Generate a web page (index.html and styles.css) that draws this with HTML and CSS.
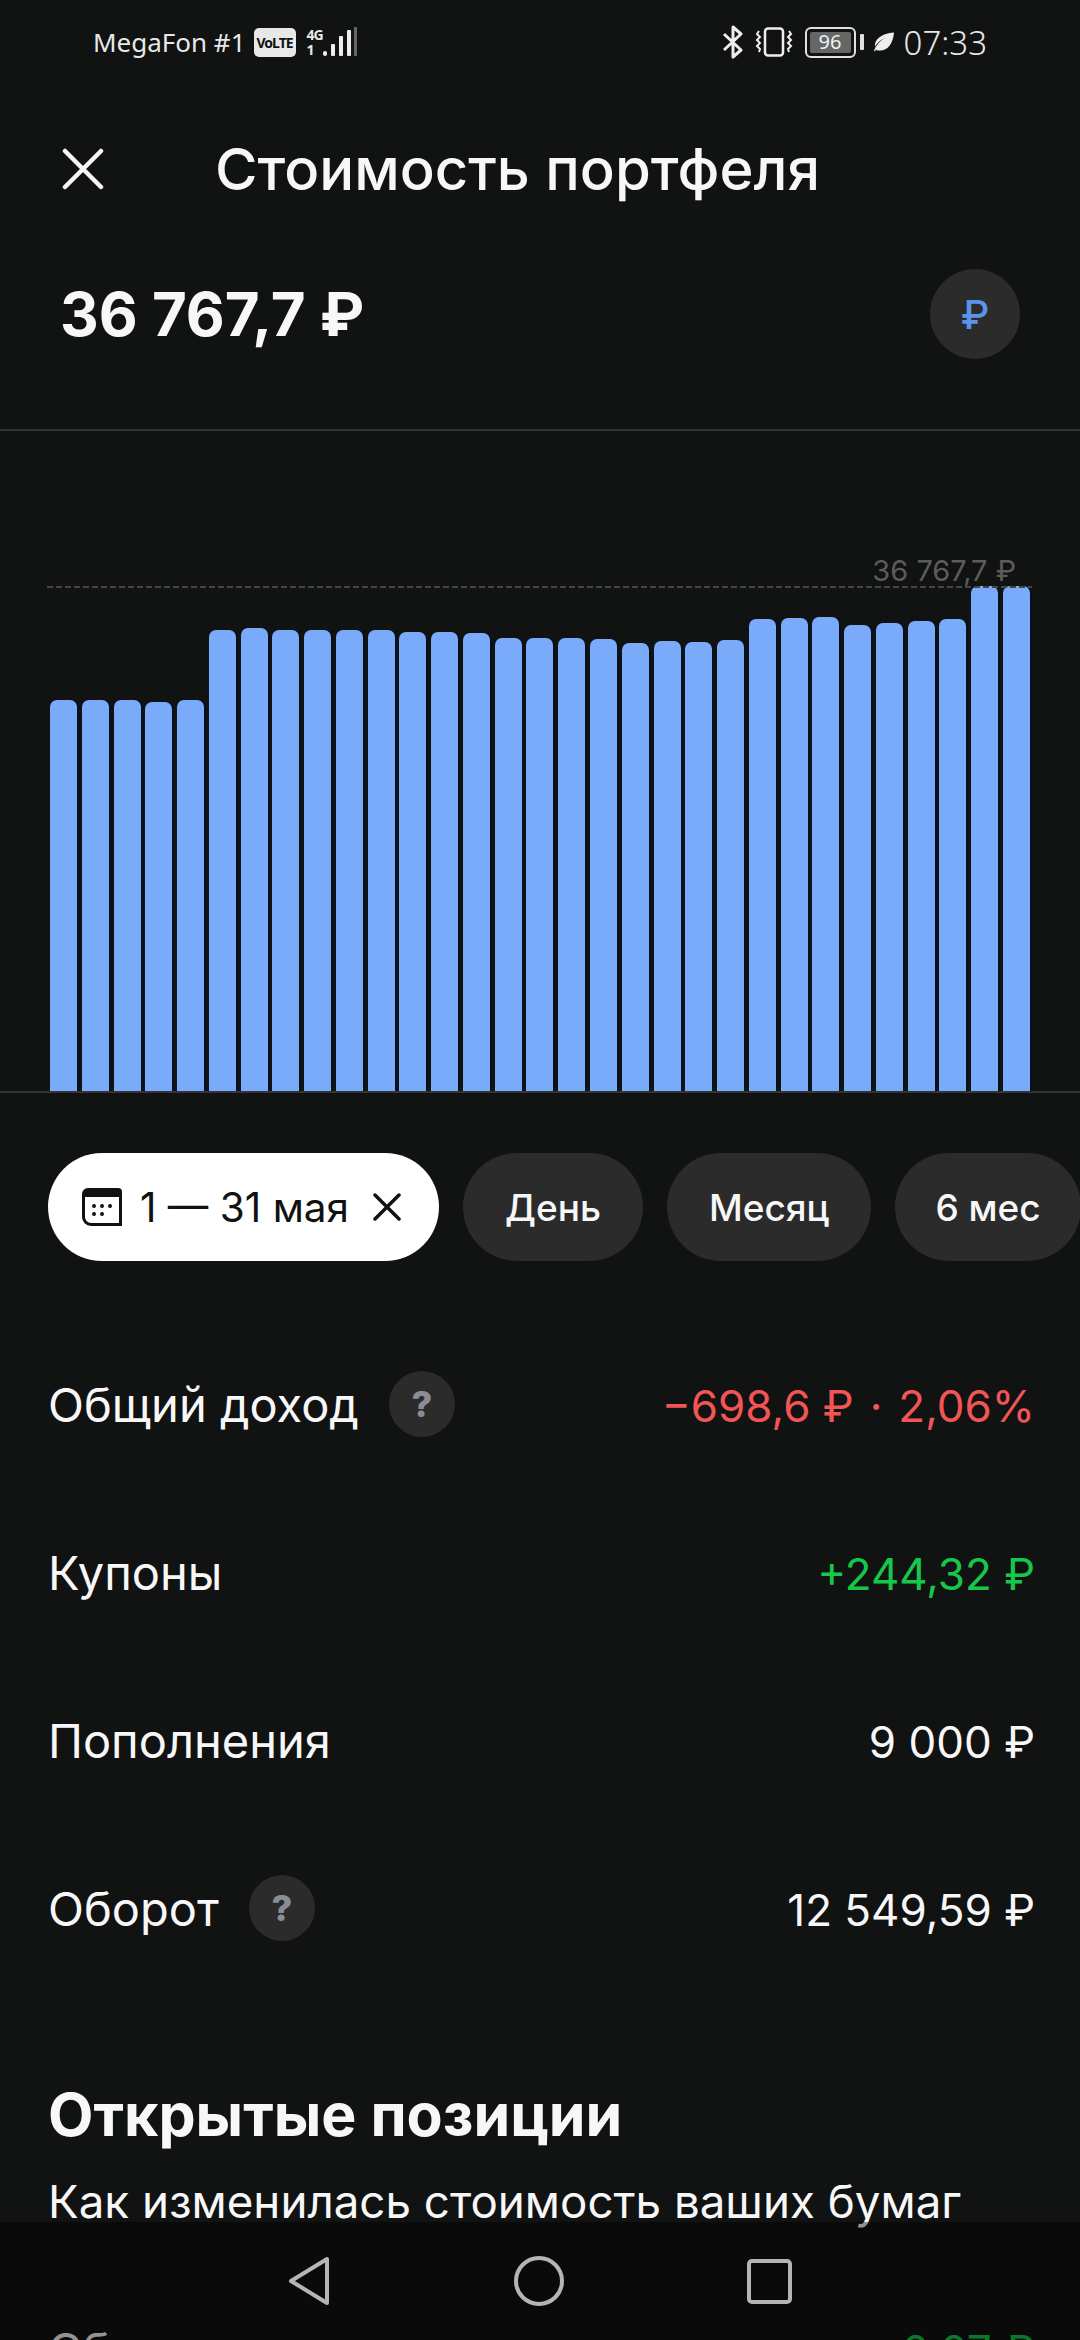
FILE: index.html
```html
<!DOCTYPE html>
<html lang="ru">
<head>
    <meta charset="UTF-8">
    <meta name="viewport" content="width=device-width, initial-scale=1.0">
    <title>Стоимость портфеля</title>
    <link rel="stylesheet" href="styles.css">
</head>
<body>
    <div class="screen">
        <div class="statusbar">
            <div class="status-left">
                <span>MegaFon #1</span>
                <span class="volte">VoLTE</span>
                <span class="net"><span>4G</span><span>1</span></span>
                <svg class="signal" width="34" height="30" viewBox="0 0 34 30">
                    <rect x="0" y="24" width="4" height="5" rx="2" fill="#eee"/>
                    <rect x="8" y="17" width="4" height="12" rx="1" fill="#eee"/>
                    <rect x="16" y="9" width="4" height="20" rx="1" fill="#eee"/>
                    <rect x="24" y="3" width="4" height="26" rx="1" fill="#eee"/>
                    <rect x="31" y="0" width="3" height="29" fill="#666"/>
                </svg>
            </div>
            <div class="status-right">
                <svg width="21" height="34" viewBox="0 0 21 34" fill="none" stroke="#eee" stroke-width="3" stroke-linejoin="round">
                    <path d="M2 9l17 16-8 7V2l8 7L2 25"/>
                </svg>
                <svg width="38" height="30" viewBox="0 0 38 30" fill="none" stroke="#eee" stroke-width="2.5">
                    <rect x="10" y="1.5" width="18" height="27" rx="3"/>
                    <path d="M4 4l-2 3 3 3-3 3 3 3-3 3 3 3-1 3M34 4l2 3-3 3 3 3-3 3 3 3-3 3 1 3" stroke-width="2"/>
                </svg>
                <span class="battery"><span class="battery-fill">96</span></span>
                <span class="battery-cap"></span>
                <svg class="leaf" width="21" height="22" viewBox="0 0 22 22">
                    <path d="M21 1C20 12 15 20 6 20c-2 0-3-.5-4-1l-1 2-1-1C3 13 7 9 13 6 8 8 3 12 1 16 0 8 8 2 21 1z" fill="#eee"/>
                </svg>
                <span class="clock">07:33</span>
            </div>
        </div>

        <div class="title-row">
            <svg class="close-icon" width="42" height="42" viewBox="0 0 42 42" stroke="#f5f5f5" stroke-width="4.5" stroke-linecap="round">
                <path d="M3 3l36 36M39 3L3 39"/>
            </svg>
            <h1>Стоимость портфеля</h1>
        </div>

        <div class="total-row">
            <span class="total">36 767,7 ₽</span>
            <span class="currency">₽</span>
        </div>

        <div class="chart">
            <span class="max-label">36 767,7 ₽</span>
            <div class="max-line"></div>
            <div class="bars">
                <div class="bar" style="height:391px"></div>
                <div class="bar" style="height:391px"></div>
                <div class="bar" style="height:391px"></div>
                <div class="bar" style="height:389px"></div>
                <div class="bar" style="height:391px"></div>
                <div class="bar" style="height:461px"></div>
                <div class="bar" style="height:463px"></div>
                <div class="bar" style="height:461px"></div>
                <div class="bar" style="height:461px"></div>
                <div class="bar" style="height:461px"></div>
                <div class="bar" style="height:461px"></div>
                <div class="bar" style="height:459px"></div>
                <div class="bar" style="height:459px"></div>
                <div class="bar" style="height:458px"></div>
                <div class="bar" style="height:453px"></div>
                <div class="bar" style="height:453px"></div>
                <div class="bar" style="height:453px"></div>
                <div class="bar" style="height:452px"></div>
                <div class="bar" style="height:448px"></div>
                <div class="bar" style="height:450px"></div>
                <div class="bar" style="height:449px"></div>
                <div class="bar" style="height:451px"></div>
                <div class="bar" style="height:472px"></div>
                <div class="bar" style="height:473px"></div>
                <div class="bar" style="height:474px"></div>
                <div class="bar" style="height:466px"></div>
                <div class="bar" style="height:468px"></div>
                <div class="bar" style="height:470px"></div>
                <div class="bar" style="height:472px"></div>
                <div class="bar" style="height:505px"></div>
                <div class="bar" style="height:505px"></div>
            </div>
        </div>

        <div class="periods">
            <div class="chip chip-active">
                <svg width="40" height="38" viewBox="0 0 40 38">
                    <path d="M6 1.5h30a2.5 2.5 0 0 1 2.500 2.500v32.500H9a7.500 7.500 0 0 1-7.500-7.500V6a4.500 4.500 0 0 1 4.500-4.500z" fill="none" stroke="#111" stroke-width="3"/>
                    <path d="M3 2h34v7H3z" fill="#111"/>
                    <g fill="#111">
                        <circle cx="12" cy="18" r="2"/><circle cx="20" cy="18" r="2"/><circle cx="28" cy="18" r="2"/>
                        <circle cx="12" cy="26" r="2"/><circle cx="20" cy="26" r="2"/>
                    </g>
                </svg>
                <span>1 — 31 мая</span>
                <svg class="chip-x" width="28" height="28" viewBox="0 0 28 28" stroke="#111" stroke-width="3.5" stroke-linecap="round">
                    <path d="M2 2l24 24M26 2L2 26"/>
                </svg>
            </div>
            <div class="chip">День</div>
            <div class="chip">Месяц</div>
            <div class="chip">6 мес</div>
        </div>

        <div class="stats">
            <div class="stat">
                <div class="stat-name">Общий доход <span class="hint">?</span></div>
                <div class="stat-value negative"><span>−698,6 ₽</span><span class="dot">·</span><span>2,06%</span></div>
            </div>
            <div class="stat">
                <div class="stat-name">Купоны</div>
                <div class="stat-value positive">+244,32 ₽</div>
            </div>
            <div class="stat">
                <div class="stat-name">Пополнения</div>
                <div class="stat-value">9 000 ₽</div>
            </div>
            <div class="stat">
                <div class="stat-name">Оборот <span class="hint">?</span></div>
                <div class="stat-value">12 549,59 ₽</div>
            </div>
        </div>

        <h2>Открытые позиции</h2>
        <p class="subtitle">Как изменилась стоимость ваших бумаг</p>

        <div class="position">
            <div class="stat-name">Сбер</div>
            <div class="stat-value positive">+0,07 ₽</div>
        </div>

        <div class="navbar">
            <svg width="42" height="50" viewBox="0 0 42 50" fill="none" stroke="#b5b5b5" stroke-width="4" stroke-linejoin="round">
                <path d="M39 3v44L3 25z"/>
            </svg>
            <svg width="50" height="50" viewBox="0 0 50 50" fill="none" stroke="#b5b5b5" stroke-width="4">
                <circle cx="25" cy="25" r="23"/>
            </svg>
            <svg width="45" height="45" viewBox="0 0 45 45" fill="none" stroke="#b5b5b5" stroke-width="4" stroke-linejoin="round">
                <rect x="2" y="2" width="41" height="41" rx="3"/>
            </svg>
        </div>
    </div>
</body>
</html>
```

FILE: styles.css
```css
* {
    box-sizing: border-box;
}

html, body {
    margin: 0;
    padding: 0;
    background: #111212;
}

.screen {
    position: relative;
    width: 1080px;
    height: 2340px;
    overflow: hidden;
    background: #111212;
    color: #f7f7f7;
    font-family: 'Inter', 'Noto Sans', sans-serif;
}

/* Status bar */
.statusbar {
    height: 84px;
    padding: 0 93px 0 93px;
    display: flex;
    justify-content: space-between;
    align-items: center;
    font-family: 'Noto Sans', sans-serif;
    font-size: 26px;
    color: #e8e8e8;
}

.status-left, .status-right {
    display: flex;
    align-items: center;
}

.status-left {
    gap: 8px;
}

.status-right {
    gap: 12px;
}

.clock {
    margin-left: -3px;
    font-size: 33px;
    font-weight: 300;
}

.volte {
    width: 42px;
    height: 29px;
    background: #e8e8e8;
    color: #111;
    border-radius: 5px;
    font-size: 14px;
    font-weight: 700;
    letter-spacing: -1px;
    text-align: center;
    line-height: 29px;
}

.net {
    margin-left: 3px;
    display: flex;
    flex-direction: column;
    font-size: 14px;
    font-weight: 700;
    line-height: 15px;
    letter-spacing: -1px;
}

.signal {
    margin-left: -8px;
}

.battery {
    width: 51px;
    height: 31px;
    padding: 3px;
    border: 2.5px solid #e0e0e0;
    border-radius: 6px;
}

.battery-fill {
    display: block;
    height: 100%;
    background: #666;
    border-radius: 2px;
    color: #f0f0f0;
    font-size: 20px;
    line-height: 20px;
    text-align: center;
}

.battery-cap {
    width: 4px;
    height: 16px;
    margin-left: -8px;
    background: #e0e0e0;
    border-radius: 1px;
}

.leaf {
    margin-left: -2px;
}

/* Header */
.title-row {
    height: 88px;
    margin-top: 41px;
    padding-left: 62px;
    display: flex;
    align-items: center;
}

.close-icon {
    flex-shrink: 0;
}

h1 {
    margin: 0 0 0 111px;
    font-size: 58px;
    font-weight: 500;
    white-space: nowrap;
}

.total-row {
    height: 90px;
    margin-top: 56px;
    padding: 0 60px 0 60px;
    display: flex;
    justify-content: space-between;
    align-items: center;
}

.total {
    font-size: 60px;
    font-weight: 700;
}

.currency {
    width: 90px;
    height: 90px;
    border-radius: 50%;
    background: #2b2b2c;
    color: #5b93ea;
    font-size: 40px;
    font-weight: 500;
    display: flex;
    justify-content: center;
    align-items: center;
}

/* Chart */
.chart {
    position: relative;
    height: 664px;
    margin-top: 70px;
    border-top: 2px solid #333436;
    border-bottom: 2px solid #333436;
    padding: 0 50px;
    display: flex;
    align-items: flex-end;
}

.bars {
    width: 100%;
    display: flex;
    justify-content: space-between;
    align-items: flex-end;
}

.bar {
    width: 27px;
    border-radius: 7px 7px 0 0;
    background: #7aabfb;
    box-shadow: 2px 0 0 #07101c;
}

.max-line {
    position: absolute;
    left: 47px;
    right: 48px;
    top: 155px;
    height: 2px;
    background: repeating-linear-gradient(90deg, #454545 0 6px, transparent 6px 9px);
}

.max-label {
    position: absolute;
    right: 64px;
    top: 122px;
    font-size: 29px;
    color: #5c5c5c;
}

/* Period chips */
.periods {
    height: 108px;
    margin-top: 60px;
    padding-left: 48px;
    display: flex;
    gap: 24px;
    white-space: nowrap;
}

.chip {
    height: 108px;
    padding: 0 42px;
    border-radius: 54px;
    background: #2b2b2c;
    font-size: 37px;
    font-weight: 500;
    display: flex;
    align-items: center;
    flex-shrink: 0;
}

.chip:last-child {
    padding: 0 40px;
}

.chip-active {
    width: 391px;
    padding: 0 0 0 34px;
    background: #fff;
    color: #111;
}

.chip-active span {
    margin-left: 18px;
    font-size: 40.500px;
    font-weight: 400;
}

.chip-x {
    margin-left: 24px;
}

/* Stats */
.stats {
    margin-top: 59px;
    padding: 0 48px;
}

.stat, .position {
    display: flex;
    justify-content: space-between;
    align-items: center;
}

.stat {
    height: 168px;
}

.stat-name {
    display: flex;
    align-items: center;
    gap: 30px;
    font-size: 47px;
}

.stat-value {
    display: flex;
    margin-right: -3px;
    padding-top: 3px;
    font-size: 44px;
}

.dot {
    margin: 0 16px;
}

.hint {
    width: 66px;
    height: 66px;
    border-radius: 50%;
    background: #2b2b2c;
    color: #8b8d96;
    font-size: 36px;
    font-weight: 800;
    display: flex;
    justify-content: center;
    align-items: center;
}

.negative {
    color: #f25555;
}

.positive {
    color: #17c74a;
}

h2 {
    margin: 87px 48px 0;
    font-size: 59px;
    font-weight: 700;
}

.subtitle {
    margin: 24px 48px 0;
    font-size: 45.700px;
}

.position {
    margin-top: 92px;
    padding: 0 48px;
}

/* Bottom navigation */
.navbar {
    position: absolute;
    left: 0;
    right: 0;
    bottom: 0;
    height: 118px;
    padding: 0 288px;
    display: flex;
    justify-content: space-between;
    align-items: center;
    background: rgba(0, 0, 0, 0.4);
}
```
